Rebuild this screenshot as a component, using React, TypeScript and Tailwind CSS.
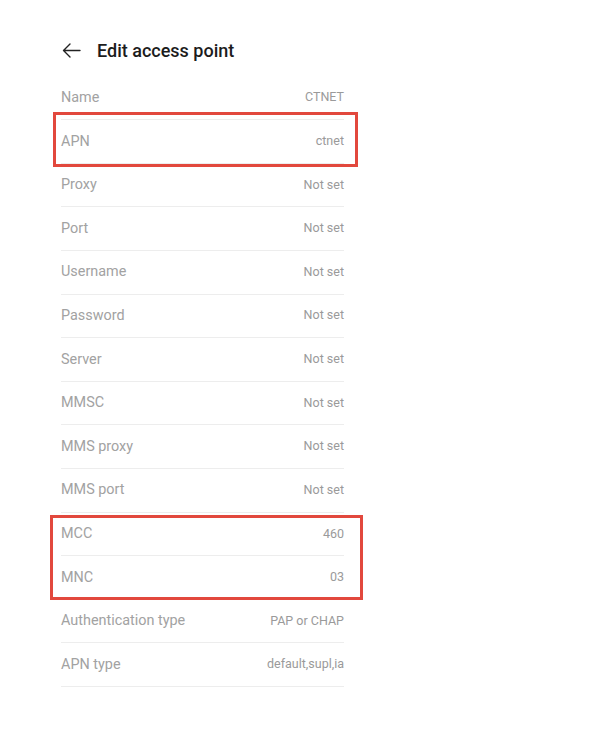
const rows: [string, string][] = [
  ["Name", "CTNET"],
  ["APN", "ctnet"],
  ["Proxy", "Not set"],
  ["Port", "Not set"],
  ["Username", "Not set"],
  ["Password", "Not set"],
  ["Server", "Not set"],
  ["MMSC", "Not set"],
  ["MMS proxy", "Not set"],
  ["MMS port", "Not set"],
  ["MCC", "460"],
  ["MNC", "03"],
  ["Authentication type", "PAP or CHAP"],
  ["APN type", "default,supl,ia"],
]

export default function App() {
  return (
    <div className="relative h-[736px] w-[592px] bg-white font-['Roboto',sans-serif]">
      <div className="ml-[61px] w-[283px] pt-[38px]">
        <div className="flex h-[24px] items-center">
          <svg width="19" height="15" viewBox="0 0 19 15" fill="none" className="ml-[1px]">
            <path d="M18 7.5H1.5M8 1L1.5 7.5L8 14" stroke="#222" strokeWidth="1.4" strokeLinecap="round" strokeLinejoin="round" />
          </svg>
          <h1 className="ml-[16px] text-[18px] font-medium text-[#1c1c1c]">Edit access point</h1>
        </div>
        <div className="mt-[14.5px]">
          {rows.map(([label, value]) => (
            <div key={label} className="flex h-[43.62px] items-center justify-between border-b border-[#ededed]">
              <span className="text-[14.4px] text-[#a2a2a2]">{label}</span>
              <span className="text-[12.5px] text-[#9a9a9a]">{value}</span>
            </div>
          ))}
        </div>
      </div>

      {/* annotation boxes */}
      <div className="absolute left-[53px] top-[112px] h-[55px] w-[305px] border-[3px] border-[#e2483d]" />
      <div className="absolute left-[50px] top-[515px] h-[85px] w-[313px] border-[3px] border-[#e2483d]" />
    </div>
  )
}
